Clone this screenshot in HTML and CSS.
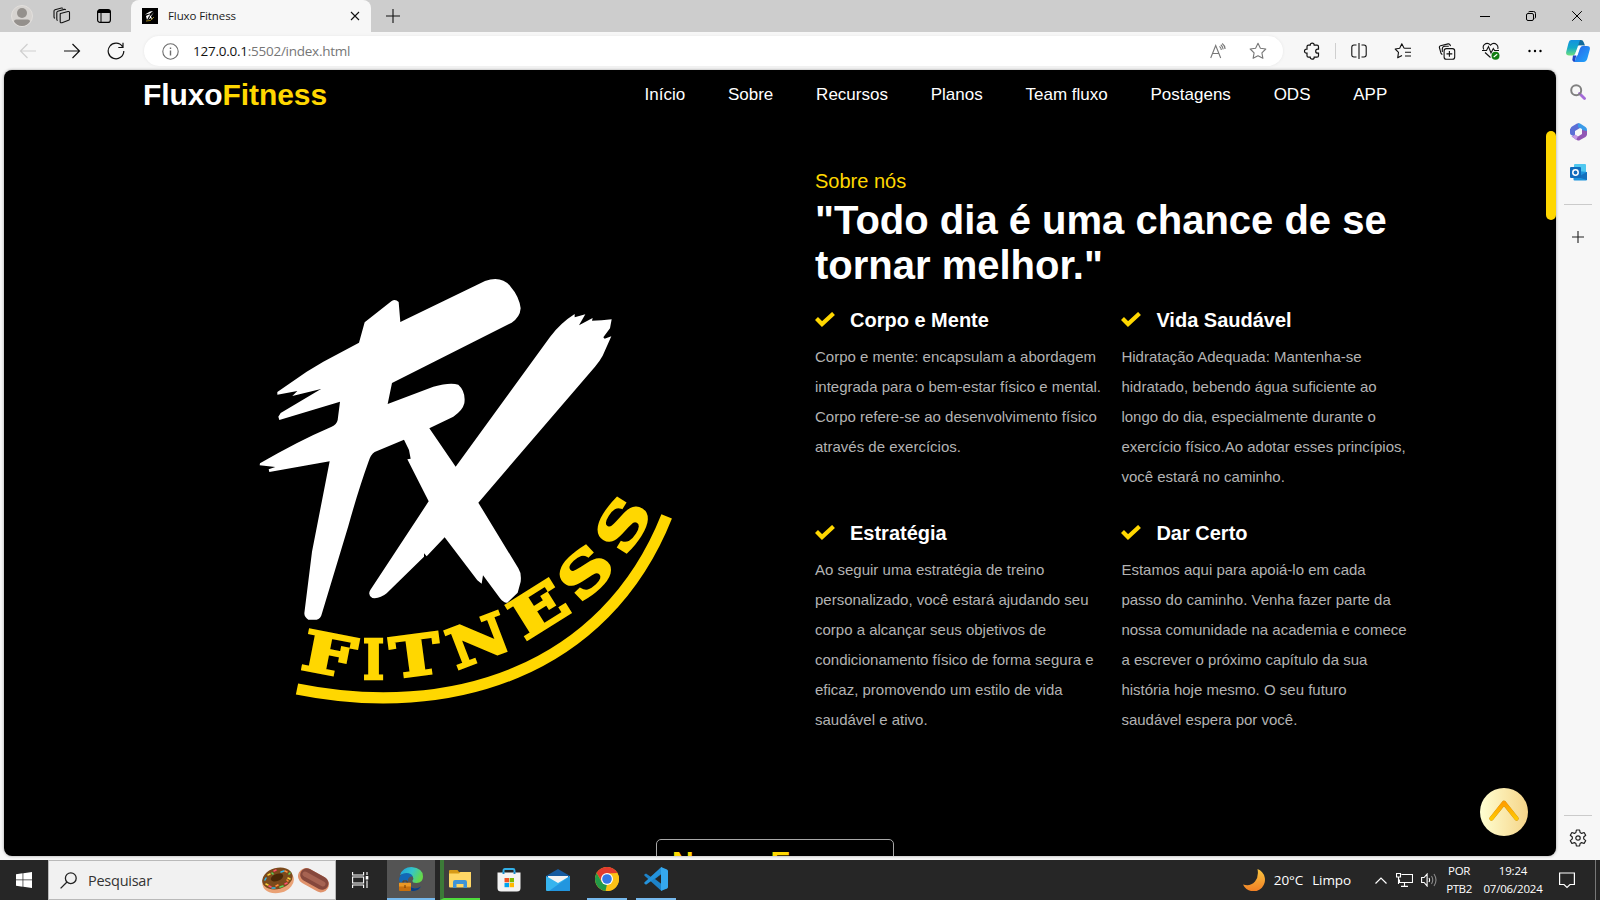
FILE: index.html
```html
<!DOCTYPE html>
<html lang="pt-BR">
<head>
<meta charset="utf-8">
<title>Fluxo Fitness</title>
<link rel="stylesheet" href="styles.css">
</head>
<body>
<div class="screen">
  <header class="tabbar">
    <svg class="ico slot-avatar" width="22" height="22" viewBox="0 0 22 22"><circle cx="11" cy="11" r="10.5" fill="#d6d3d0" stroke="#e2dfdc"/><circle cx="11" cy="8" r="5" fill="#94908c"/><path d="M3 16.5c0-1.200 1-2 2.200-2h11.600c1.200 0 2.200.8 2.200 2-1.600 2.600-4.400 4.500-8 4.500s-6.400-1.900-8-4.500z" fill="#94908c"/></svg>
    <svg class="ico slot-work" width="18" height="18" viewBox="0 0 18 18" fill="none" stroke="#111" stroke-width="1.100"><path d="M7.500 6.500l7.500-2q1.500-.3 1.500 1v6.500q0 1-1 1.300L9 15.700q-1.800.4-1.800-1V7q0-.4.300-.5zM4.700 13.500q-.9-.2-.9-1.300V5.500q0-1 1-1.300l6.500-1.800q1-.2 1.400.5M2 11.300q-1-.3-1-1.300V4q0-1 1-1.300L8.500 1q1-.2 1.400.5"/></svg>
    <svg class="ico slot-vert" width="16" height="16" viewBox="0 0 16 16"><rect x="1.600" y="1.600" width="12.800" height="12.800" rx="2.500" fill="none" stroke="#000" stroke-width="1.200"/><path d="M1.500 5V4A2.500 2.500 0 0 1 4 1.500h8A2.500 2.500 0 0 1 14.500 4v1z"/><path d="M5 5v9" stroke="#000"/></svg>
    <div class="tab">
      <svg width="16" height="16" viewBox="0 0 16 16"><path d="M0 0h16v16H0z"/><path d="M3 6.500l5-3 3-.5-3 2.500zM4 8l4-2-3 6zM7 6.500l1.500 1.500 3.500-4-3 4.500 1.500 3-2-1.500-2.500 2 2-3z" fill="#fff"/><path d="M4 13q5 1 8-4" fill="none" stroke="#9a8420"/></svg>
      <span class="tab-title">Fluxo Fitness</span>
      <svg width="10" height="10" viewBox="0 0 10 10" stroke="#111" stroke-width="1.100"><path d="M1 1l8 8M9 1L1 9"/></svg>
    </div>
    <svg class="ico slot-new" width="14" height="14" viewBox="0 0 14 14" stroke="#111" stroke-width="1.100"><path d="M7 0v14M0 7h14"/></svg>
    <div class="winbtns">
      <svg width="10" height="10" viewBox="0 0 10 10" stroke="#000"><path d="M0 5.500h10"/></svg>
      <svg width="10" height="10" viewBox="0 0 10 10" fill="none" stroke="#000"><rect x=".5" y="2.500" width="7" height="7" rx="1.500"/><path d="M2.500 1Q3 .5 4 .5h3.500q2 0 2 2V6q0 1-.7 1.500"/></svg>
      <svg width="10" height="10" viewBox="0 0 10 10" stroke="#000"><path d="M.2.200l9.600 9.600M9.800.2L.2 9.800"/></svg>
    </div>
  </header>

  <div class="toolbar">
    <div class="navbtns">
      <svg width="18" height="18" viewBox="0 0 18 18" fill="none" stroke="#cfcfcf" stroke-width="1.200"><path d="M17 9H1.500M8.500 2L1.500 9l7 7"/></svg>
      <svg width="18" height="18" viewBox="0 0 18 18" fill="none" stroke="#111" stroke-width="1.200"><path d="M1 9h15.500M9.500 2l7 7-7 7"/></svg>
      <svg width="18" height="18" viewBox="0 0 18 18" fill="none" stroke="#111" stroke-width="1.200"><path d="M16.800 9A7.800 7.800 0 1 1 15.500 4.700M16 .8v4.700h-4.700"/></svg>
    </div>
    <div class="address">
      <svg width="17" height="17" viewBox="0 0 17 17" fill="none" stroke="#6d6d6d" stroke-width="1.100"><circle cx="8.500" cy="8.500" r="7.700"/><path d="M8.500 7.500v5M8.500 4.500v1.500" stroke-width="1.400"/></svg>
      <span class="url"><b>127.0.0.1</b>:5502/index.html</span>
      <svg class="read" width="16" height="16" viewBox="0 0 16 16" fill="none" stroke="#777" stroke-width="1.100"><path d="M.7 15L5.700 2.500 10.700 15M2.500 10.500h6.400M9.500 3.300q1.800 1.500 1.800 3.700M10.800 1.700q2.200 1.800 2.400 4.700M12.200.5q2.700 2 2.900 5.500"/></svg>
      <svg class="star" width="18" height="18" viewBox="0 0 18 18" fill="none" stroke="#777" stroke-width="1.100" stroke-linejoin="round"><path d="M9 1.200l2.400 5 5.400.8-3.900 3.800 1 5.500L9 13.700l-4.900 2.600 1-5.500L1.200 7l5.400-.8z"/></svg>
    </div>
    <div class="tools">
      <svg width="16" height="18" viewBox="0 0 16 18" fill="none" stroke="#111" stroke-width="1.200"><path d="M4.500 3.200h1.700a2 2 0 0 1 4 0H13q1.500 0 1.500 1.500v2.500h-.8a2 2 0 0 0 0 4h.8v2.500q0 1.500-1.500 1.500h-2.800a2 2 0 0 1-4 0H4.500Q3 15.200 3 13.700v-2.500h-.5a2 2 0 0 1 0-4H3V4.700q0-1.500 1.500-1.500z"/></svg>
      <i class="sep"></i>
      <svg width="16" height="16" viewBox="0 0 16 16" fill="none" stroke="#111" stroke-width="1.100"><path d="M5.500 14H3q-2.200 0-2.200-2.200V4.200Q.8 2 3 2h2.500M10.500 2H13q2.200 0 2.200 2.200v7.600Q15.200 14 13 14h-2.500M8 0v16"/></svg>
      <svg width="17" height="16" viewBox="0 0 17 16" fill="none" stroke="#111" stroke-width="1.100" stroke-linejoin="round"><path d="M9.600 5.300L7.300 .8 5.200 5.300.7 6l3.300 3.400-.8 5.400 4.300-2.300M9.600 5.300h6.900M10.500 9.300h6M10.500 13h6"/></svg>
      <svg width="17" height="17" viewBox="0 0 17 17" fill="none" stroke="#111" stroke-width="1.100"><rect x="5.600" y="5.600" width="10.600" height="10.600" rx="2.300"/><path d="M10.900 8v5.800M8 10.900h5.800M12 3.200L11.600 2q-.5-1.400-2-1.100L2 2.700Q.6 3.100.9 4.500l1.600 5.800q.4 1 1.400 1.200M3.800 9V6q0-2.500 2.500-2.700h4"/></svg>
      <svg width="18" height="18" viewBox="0 0 18 18" fill="none" stroke="#111" stroke-width="1.100"><path d="M1.800 7.500Q.3 4.500 2.300 2.600q3.300-2.600 6.200.5 3-3.100 6.200-.5Q16.600 4.500 15.700 7M0 8.500h4.500l2-4 2.500 6.500 2.300-4.500 1.300 2H17M3 10.500l5.500 5"/><circle cx="13.500" cy="13.700" r="4" fill="#107c10" stroke="none"/><path d="M11.700 15l3.500-2.800" stroke="#fff"/></svg>
      <svg width="14" height="4" viewBox="0 0 14 4"><circle cx="1.500" cy="2" r="1.200"/><circle cx="7" cy="2" r="1.200"/><circle cx="12.500" cy="2" r="1.200"/></svg>
    </div>
    <svg class="copilot" width="24" height="22" viewBox="0 0 24 22"><defs><linearGradient id="cA" x1="0" y1="0" x2="0" y2="1"><stop offset="0" stop-color="#1492e0"/><stop offset=".5" stop-color="#13a9c9"/><stop offset="1" stop-color="#6fe07c"/></linearGradient><linearGradient id="cB" x1="0" y1="0" x2="1" y2="1"><stop offset="0" stop-color="#2b62e8"/><stop offset="1" stop-color="#1ea8fb"/></linearGradient></defs><path d="M11 0h4q2 0 2.700 2.200L19 5.500h-7z" fill="#126a9c"/><path d="M5 0h9l-4.500 13Q8.800 15.500 6.500 15.500H3Q-.5 15.500.2 12L2.500 3Q3.200 0 5 0z" fill="url(#cA)"/><path d="M7 15.500Q9 15 9.800 13l1 0-2 9Q6.800 22 6.300 20z" fill="#2045c4"/><path d="M15.500 6H21q3.500 0 2.800 3.500L21.500 18q-1 4-4 4H8.500l4.500-13Q13.700 6 15.500 6z" fill="url(#cB)"/><path d="M13 5.800h4.500Q14.600 6 13.800 8.800L11.500 15.500H7Q9 15 9.800 12.500z" fill="#fff"/></svg>
  </div>

  <div class="middle">
    <main class="page">
      <nav class="sitenav">
        <div class="brand">Fluxo<span>Fitness</span></div>
        <div class="links"><a>Início</a><a>Sobre</a><a>Recursos</a><a>Planos</a><a>Team fluxo</a><a>Postagens</a><a>ODS</a><a>APP</a></div>
      </nav>
      <section class="about">
        <svg class="logo" width="450" height="460" viewBox="0 0 1350 1380">
          <path fill="#fff" d="M112 396L200 335L250 305L357 248L374 187L455 123Q466 116 476 126L481 186L735 63Q785 46 812 80Q838 110 842 145Q840 172 815 188L456 369L443 432L580 380Q630 366 655 374Q678 395 673 430Q668 452 640 470L568 505L647 620L930 231Q960 190 1004 162L1004 172L1036 163L1017 196L1058 174L1056 182Q1085 182 1115 178L1110 205L1090 232L1094 236L1114 229L1088 287Q1080 302 1065 320L715 728L835 925Q845 940 842 965L833 998L802 1028Q792 1030 780 1015L729 946L725 971L712 961L614 832L560 889L552 880L552 890L440 1000Q420 1017 397 1014Q382 1005 391 990L566 724L502 598L512 596L507 570L492 539L404 576Q392 584 386 604Q355 690 325 798L246 1060Q242 1078 230 1079H205Q193 1072 193 1060L216 875L269 604L88 636L86 628L106 621L59 616L60 610Q170 545 275 500Q290 494 293 480L300 425L118 480L115 470L122 459L243 387L157 408L172 393L112 404Z"/>
          <path fill="none" stroke="#ffd700" stroke-width="34" d="M171 1287C630 1380 1095 1235 1280 769"/>
          <g class="arc-word">
            <text transform="translate(257 1241) rotate(11) scale(1.360 1)">F</text>
            <text transform="translate(401 1256) scale(.820 1)">I</text>
            <text transform="translate(534 1245) rotate(-7.500) scale(1.220 1)">T</text>
            <text transform="translate(736 1196) rotate(-21) scale(1.220 1)">N</text>
            <text transform="translate(927 1098) rotate(-32) scale(1.360 1)">E</text>
            <text transform="translate(1077 980) rotate(-44) scale(1.300 1)">S</text>
            <text transform="translate(1199 825) rotate(-58) scale(1.340 1)">S</text>
          </g>
        </svg>
        <div class="copy">
          <p class="kicker">Sobre nós</p>
          <h1>"Todo dia é uma chance de se<br>tornar melhor."</h1>
          <div class="features">
            <article><h2><svg width="20" height="16" viewBox="0 0 20 16"><path d="M1.500 6.500l5.500 5.500L18.500 1.500" fill="none" stroke="#ffd700" stroke-width="4.200"/></svg>Corpo e Mente</h2><p>Corpo e mente: encapsulam a abordagem<br>integrada para o bem-estar físico e mental.<br>Corpo refere-se ao desenvolvimento físico<br>através de exercícios.</p></article>
            <article><h2><svg width="20" height="16" viewBox="0 0 20 16"><path d="M1.500 6.500l5.500 5.500L18.500 1.500" fill="none" stroke="#ffd700" stroke-width="4.200"/></svg>Vida Saudável</h2><p>Hidratação Adequada: Mantenha-se<br>hidratado, bebendo água suficiente ao<br>longo do dia, especialmente durante o<br>exercício físico.Ao adotar esses princípios,<br>você estará no caminho.</p></article>
            <article><h2><svg width="20" height="16" viewBox="0 0 20 16"><path d="M1.500 6.500l5.500 5.500L18.500 1.500" fill="none" stroke="#ffd700" stroke-width="4.200"/></svg>Estratégia</h2><p>Ao seguir uma estratégia de treino<br>personalizado, você estará ajudando seu<br>corpo a alcançar seus objetivos de<br>condicionamento físico de forma segura e<br>eficaz, promovendo um estilo de vida<br>saudável e ativo.</p></article>
            <article><h2><svg width="20" height="16" viewBox="0 0 20 16"><path d="M1.500 6.500l5.500 5.500L18.500 1.500" fill="none" stroke="#ffd700" stroke-width="4.200"/></svg>Dar Certo</h2><p>Estamos aqui para apoiá-lo em cada<br>passo do caminho. Venha fazer parte da<br>nossa comunidade na academia e comece<br>a escrever o próximo capítulo da sua<br>história hoje mesmo. O seu futuro<br>saudável espera por você.</p></article>
          </div>
        </div>
      </section>
      <div class="next">Nossa E</div>
      <div class="thumb"></div>
      <div class="totop"><svg width="30" height="21" viewBox="0 0 30 21"><defs><linearGradient id="up" x1="0" y1="0" x2="0" y2="1"><stop offset="0" stop-color="#ff9d00"/><stop offset="1" stop-color="#ffc800"/></linearGradient></defs><path d="M2.500 18.500L15 2.800l12.500 15.700" fill="none" stroke="#c98a10" stroke-width="4.400" stroke-linecap="round" stroke-linejoin="round"/><path d="M2.500 18.500L15 2.800l12.500 15.700" fill="none" stroke="url(#up)" stroke-width="3.800" stroke-linecap="round" stroke-linejoin="round"/></svg></div>
    </main>
    <aside class="side">
      <svg width="16" height="16" viewBox="0 0 16 16" fill="none"><path d="M9.500 9.500l5 5" stroke="#a46bd8" stroke-width="2.800" stroke-linecap="round"/><circle cx="6.200" cy="6.200" r="5" stroke="#808080" stroke-width="2"/></svg>
      <svg width="17" height="18" viewBox="0 0 17 18"><path d="M1 5Q.5 4.500 2 3.500L7 .5Q10-.5 10 2v3L5 8v5Q0 12.500 0 10V6z" fill="#5c6fd6"/><path d="M8 .5q1-.7 2.500.3L15.500 4Q17 5 17 7v5l-5-3V6L8 4z" fill="#3b9be8"/><path d="M17 8v3q0 2-1.500 3L10 17q-1.500 1-3 0L1.500 13.500 5 12l3 1.500 4-2.500V7z" fill="#9156b5"/><path d="M1 12.500q2 1.500 4-1l3 2-2 3.500z" fill="#c69ae8"/></svg>
      <svg width="17" height="17" viewBox="0 0 17 17"><path d="M4 1q0-1 1-1h10q1 0 1 1v9H4z" fill="#50c8f0"/><path d="M3.500 6.500L17 8v7.500q0 1-1 1H4.500q-1 0-1-1z" fill="#1c93dc"/><path d="M17 8l-9.500 5 9.500 3z" fill="#1470bd"/><rect y="3" width="11" height="11" rx="1" fill="#0f6cbd"/><circle cx="5.500" cy="8.500" r="2.700" fill="none" stroke="#fff" stroke-width="1.500"/></svg>
      <i></i>
      <svg width="12" height="12" viewBox="0 0 12 12" stroke="#222" stroke-width="1.100"><path d="M6 0v12M0 6h12"/></svg>
      <i class="low"></i>
      <svg width="18" height="18" viewBox="0 0 18 18" fill="none" stroke="#222" stroke-width="1.200" stroke-linejoin="round"><path d="M7.400 1h3.200l.5 2.500 1.500.9 2.500-.9 1.600 2.800-2 1.700v1.900l2 1.700-1.600 2.900-2.500-.9-1.500.9-.5 2.500H7.400l-.5-2.500-1.500-.9-2.500.9-1.600-2.900 2-1.700V8L1.300 6.300l1.600-2.800 2.500.9 1.500-.9z"/><circle cx="9" cy="9" r="2.200"/></svg>
    </aside>
  </div>

  <footer class="taskbar">
    <div class="start"><svg width="16" height="16" viewBox="0 0 16 16" fill="#fff"><path d="M0 2.200L6.600 1.300v6.300H0zM7.300 1.200L16 0v7.600H7.300zM0 8.300h6.600v6.400L0 13.800zM7.300 8.300H16V16l-8.700-1.200z"/></svg></div>
    <div class="search">
      <svg width="17" height="17" viewBox="0 0 17 17" fill="none" stroke="#222" stroke-width="1.300"><circle cx="10.800" cy="6.200" r="5.400"/><path d="M7 10L.6 16.400"/></svg>
      <span>Pesquisar</span>
      <svg class="treats" width="70" height="28" viewBox="0 0 70 28"><ellipse cx="18" cy="15.500" rx="16" ry="11.500" fill="#eaa276" transform="rotate(-15 18 15)"/><ellipse cx="17.500" cy="12.500" rx="15.500" ry="10.500" fill="#7b4a1c" transform="rotate(-15 17.500 13)"/><ellipse cx="17" cy="11.500" rx="6.500" ry="3.500" fill="#4a2808" transform="rotate(-20 17 11.500)"/><g stroke-width="1.600" stroke-linecap="round"><path d="M5 14l1-2M21 6l3-1M12 22l3 0" stroke="#34b7e8"/><path d="M8 9l2-1M28 12l2 1M6 18l2 1" stroke="#f8cf3a"/><path d="M14 5l2-1M25 18l2-1M9 20l2 1" stroke="#ff4f6e"/><path d="M29 8l1-1M20 21l3-1M12 7l1 1" stroke="#5bd45b"/><path d="M25 5l2 1M16 20l2-1M27 14l1 1" stroke="#ff8d3a"/></g><rect x="37" y="6" width="33" height="16" rx="8" fill="#e0926b" transform="rotate(29 53 14)"/><rect x="38.500" y="6" width="30.500" height="13" rx="6.500" fill="#86483c" transform="rotate(29 53 14)"/><path d="M45 8l18 10" stroke="#a66352" stroke-width="5" stroke-linecap="round"/></svg>
    </div>
    <div class="tview"><svg width="17" height="16" viewBox="0 0 17 16" fill="none" stroke="#fff" stroke-width="1.100"><path d="M.6 0v3h11V0M.6 16v-3h11v3M.6 5h11v6H.6zM15 0v3M15 8.500V16"/><path d="M15 4v3.500" stroke-width="2.600"/></svg></div>
    <div class="app edge"><svg width="24" height="24" viewBox="0 0 24 24"><defs><linearGradient id="eg" x1="0" y1="0" x2="1" y2=".4"><stop offset="0" stop-color="#1c9ee0"/><stop offset=".55" stop-color="#35c6c8"/><stop offset="1" stop-color="#64d94b"/></linearGradient></defs><path d="M1 8Q4 0 12.500 0 24 1 24 9.500 24 16 17.500 16q-4.500 0-4-2.500 1.500-2 .3-4Q10 5 1 8z" fill="url(#eg)"/><path d="M0 12Q1 6 7.500 6q5 .2 6.300 3.500-5-.5-5 4.500 1 7 7.500 7.500 3 0 5.700-1.500Q18 24 12.500 24 1 23 0 12z" fill="#1268b6"/><path d="M8.500 14Q9 21 16 21.500q3 0 6-2-3.500 5-9 4.500Q7 21 8.500 14z" fill="#0d3d80"/><rect y="15.500" width="12" height="8.500" rx="1" fill="#c8700e"/><path d="M0 16h12v3.500H0z" fill="#ea9724"/><path d="M4 15.500v-1.500h4v1.500M6 18v3" stroke="#6e3904" fill="none"/></svg></div>
    <div class="app files"><svg width="22" height="18" viewBox="0 0 22 18"><path d="M0 1q0-1 1-1h7.500l1.500 2H22v3H0z" fill="#d79a17"/><path d="M0 3.500h10L11.500 2H22v14.500q0 1-1 1H1q-1 0-1-1z" fill="#ffd766"/><path d="M4 18v-6q0-2 2-2h10q2 0 2 2v6h-3.500v-4h-7v4z" fill="#3f94d8"/></svg></div>
    <div class="app"><svg width="24" height="24" viewBox="0 0 24 24"><path d="M6.500 6V2.500q0-1.500 1.500-1.500h8q1.500 0 1.500 1.500V6" fill="none" stroke="#32b0e8" stroke-width="1.900"/><path d="M.5 4.500h23V20q0 3.500-3.500 3.500H4Q.5 23.500.5 20z" fill="#f3f3f3"/><path d="M6.500 4v2M17.500 4v2" stroke="#1688c8" stroke-width="1.900"/><path d="M7.500 10H12v4.300H7.500z" fill="#f25022"/><path d="M12.600 10H17v4.300h-4.400z" fill="#7fba00"/><path d="M7.500 15H12v4.200H7.500z" fill="#00a4ef"/><path d="M12.600 15H17v4.200h-4.400z" fill="#ffb900"/></svg></div>
    <div class="app"><svg width="24" height="22" viewBox="0 0 24 22"><path d="M0 7l12-7 12 7v5H0z" fill="#155a9f"/><path d="M2 7h20v7H2z" fill="#f3f3f3"/><path d="M0 7l12 7 12-7v14q0 1-1 1H1q-1 0-1-1z" fill="#36b4ee"/><path d="M24 7L3 22h20q1 0 1-1z" fill="#2296df"/></svg></div>
    <div class="app run"><svg width="24" height="24" viewBox="0 0 24 24"><circle cx="12" cy="12" r="12" fill="#fbc116"/><path d="M1.600 6A12 12 0 0 1 22.400 6L12 7 7 15z" fill="#e33b2e"/><path d="M1.600 6l5.200 9L12 17.200l-1.500 6.700A12 12 0 0 1 1.600 6z" fill="#229a48"/><path d="M12 6.500h10.600A12 12 0 0 1 11 24l5.500-9z" fill="#fbc116"/><circle cx="12" cy="12" r="6" fill="#fff"/><circle cx="12" cy="12" r="4.800" fill="#3478e5"/></svg></div>
    <div class="app run code"><svg width="24" height="24" viewBox="0 0 24 24"><path d="M17.500 0L7 10 2 6.500.3 7.500v1L17.500 24z" fill="#1d82c8"/><path d="M17.500 7v10L11 12z" fill="#262626"/><path d="M17.500 0v6.500L2 17.800l-1.700-1.200v-1L17.500 0z" fill="#2493dc"/><path d="M17 0l6 2.500q1 .5 1 1.500v16q0 1-1 1.500L17 24z" fill="#35a8ee"/></svg></div>
    <div class="weather"><svg width="22" height="22" viewBox="0 0 22 22"><defs><linearGradient id="mn" x1="0" y1="0" x2="0" y2="1"><stop offset="0" stop-color="#f9c440"/><stop offset="1" stop-color="#f07f24"/></linearGradient></defs><path d="M14.500 0A11.500 11.500 0 1 1 0 15.500Q7 18 12 12.500 16 7.500 14.500 0z" fill="url(#mn)"/></svg><span>20°C</span><span>Limpo</span></div>
    <div class="tray">
      <svg width="12" height="7" viewBox="0 0 12 7" fill="none" stroke="#fff" stroke-width="1.200"><path d="M.5 6.500L6 1l5.500 5.500"/></svg>
      <svg width="17" height="14" viewBox="0 0 17 14" fill="none" stroke="#fff" stroke-width="1.100"><path d="M5.500 1.500h11v8h-13V6.500M5 13.400h7M8.500 9.500v4M.5.500h4v3.500h-4zM2.500 4v7"/></svg>
      <svg width="17" height="14" viewBox="0 0 17 14" fill="none" stroke="#fff" stroke-width="1.100"><path d="M.6 4.500h2.500l3-3.500v12l-3-3.500H.6zM8 5q1.200 2 0 4"/><path d="M10.500 3q2.500 4 0 8M13 1q4 6 0 12" stroke="#8a8a8a"/></svg>
    </div>
    <div class="two lang"><span>POR</span><span>PTB2</span></div>
    <div class="two clock"><span>19:24</span><span>07/06/2024</span></div>
    <svg class="note" width="16" height="17" viewBox="0 0 16 17" fill="none" stroke="#fff" stroke-width="1.200"><path d="M.6 1h14.800v11.500H11L8 15.500l-3-3H.6z"/></svg>
    <i class="peek"></i>
  </footer>
</div>
</body>
</html>
```
FILE: styles.css
```css
* { box-sizing: border-box; }
body { margin: 0; overflow: hidden; }
svg { display: block; flex: none; }
.screen { width: 1600px; height: 900px; display: grid; grid-template-rows: 32px 38px 790px 40px; background: #f7f7f7; font-family: "Open Sans", "Noto Sans", sans-serif; }

.tabbar { display: flex; align-items: center; background: #cdcdcd; }
.slot-avatar { margin-left: 11px; }
.slot-work { margin-left: 20px; }
.slot-vert { margin-left: 25px; }
.tab { align-self: stretch; display: flex; align-items: center; width: 240px; margin-left: 19px; padding: 0 11px; background: #f7f7f7; border-radius: 8px 8px 0 0; }
.tab-title { flex: 1; margin-left: 10px; padding-bottom: 1px; font-size: 11.500px; letter-spacing: -.1px; color: #1b1b1b; }
.slot-new { margin-left: 15px; }
.winbtns { display: flex; margin-left: auto; }
.winbtns svg { margin: 0 18px; }

.toolbar { display: flex; align-items: flex-start; }
.navbtns { display: flex; align-items: center; height: 38px; padding-left: 19px; gap: 26px; width: 144px; }
.address { display: flex; align-items: center; width: 1139px; height: 30px; margin-top: 4px; padding: 0 16px 0 18px; border-radius: 15px; background: #fff; box-shadow: 0 0 3px #e6e6e6; }
.url { flex: 1; margin-left: 14px; font-size: 13.500px; letter-spacing: -.25px; color: #767676; }
.url b { font-weight: 400; color: #111; }
.star { margin-left: 23px; }
.tools { display: flex; align-items: center; height: 38px; margin-left: 20px; }
.tools svg { width: 18px; margin: 0 13px; }
.tools svg:first-child { margin: 0 14px 0 0; }
.tools .sep { width: 1px; height: 16px; margin: 0 1px 0 0; background: #cfcfcf; }
.copilot { margin: 8px 0 0 9px; }

.middle { display: flex; min-height: 0; }
.page { position: relative; width: 1552px; height: 786px; margin-left: 4px; overflow: hidden; background: #000; border-radius: 8px; box-shadow: 0 0 3px #999; font-family: "Liberation Sans", Arial, sans-serif; color: #fff; }
.sitenav { display: flex; align-items: center; height: 49px; padding-left: 139px; }
.brand { width: 501.500px; font-size: 30px; font-weight: 700; letter-spacing: -.08px; }
.brand span { color: #ffd700; }
.links { display: flex; gap: 42.800px; font-size: 17px; white-space: nowrap; }

.about { display: flex; height: 720px; }
.logo { margin: 141px 0 0 236px; }
.arc-word { font: 700 165px "DejaVu Serif", serif; fill: #ffd700; stroke: #ffd700; stroke-width: 8px; text-anchor: middle; }
.copy { margin: 50px 0 0 125px; }
.kicker { margin: 0; font-size: 20px; line-height: 24px; color: #ffd700; }
h1 { margin: 5px 0 0; font-size: 40px; line-height: 45px; font-weight: 700; white-space: nowrap; }
.features { display: grid; grid-template-columns: 306.400px 306px; grid-template-rows: 213px 213px; margin-top: 20px; }
h2 { display: flex; align-items: center; gap: 15px; margin: 0; font-size: 20px; line-height: 24px; }
.features p { margin: 10px 0 0; font-size: 15px; line-height: 30px; color: #b3b3b3; white-space: nowrap; }
.next { width: 238px; height: 60px; margin-left: 652px; padding-left: 15px; border: 1px solid #a8a8a8; border-radius: 5px; color: #ffd700; font-size: 30px; font-weight: 700; line-height: 43px; }
.thumb { position: absolute; right: 0; top: 61px; width: 10px; height: 89px; border-radius: 5px; background: #ffd700; }
.totop { position: absolute; right: 28px; bottom: 20px; width: 48px; height: 48px; border-radius: 50%; display: flex; align-items: center; justify-content: center; background: linear-gradient(90deg, #ffffd2, #f5d488); padding-bottom: 3px; }

.side { display: flex; flex-direction: column; align-items: center; width: 44px; height: 786px; padding-top: 14px; }
.side svg + svg { margin-top: 23px; }
.side i { width: 28px; height: 1px; margin: 23px 0 26px; background: #cbcbcb; }
.side .low { margin: auto 0 13px; }
.side .low + svg { margin-bottom: 9px; }

.taskbar { display: flex; align-items: stretch; background: #262626; color: #fff; }
.taskbar > div { display: flex; align-items: center; justify-content: center; }
.start { width: 48px; }
.taskbar .search { width: 288px; justify-content: flex-start; padding: 0 5px 0 11px; background: #f1f1f1; border: 1px solid #b9b9b9; color: #333; font-size: 14.500px; }
.search span { flex: 1; margin-left: 11px; letter-spacing: -.25px; }
.tview { width: 51px; padding-right: 3px; }
.app { width: 49px; }
.edge { background: #545454; border-bottom: 2px solid #76b9ed; }
.taskbar .edge { width: 48px; }
.taskbar .files { width: 40px; margin: 0 4px 0 5px; padding-right: 4px; background: #3e3e3e; border-left: 4px solid #3c7a38; border-bottom: 2px solid #4fdc3c; }
.run { border-bottom: 2px solid #76b9ed; }
.taskbar .run { width: 40px; margin: 0 5px; }
.taskbar .code { margin: 0 4px; }
.weather { margin-left: auto; font-size: 13.500px; letter-spacing: -.1px; gap: 9px; }
.tray { margin-left: 24px; gap: 8.500px; }
.taskbar .two { flex-direction: column; gap: 2px; padding-bottom: 1px; font-size: 11.500px; line-height: 16px; }
.lang { width: 30px; margin-left: 6px; letter-spacing: -.4px; }
.clock { width: 62px; margin-left: 8px; letter-spacing: -.2px; }
.note { align-self: center; margin-left: 15px; }
.peek { width: 5px; margin-left: 20px; border-left: 1px solid #777; }
```
